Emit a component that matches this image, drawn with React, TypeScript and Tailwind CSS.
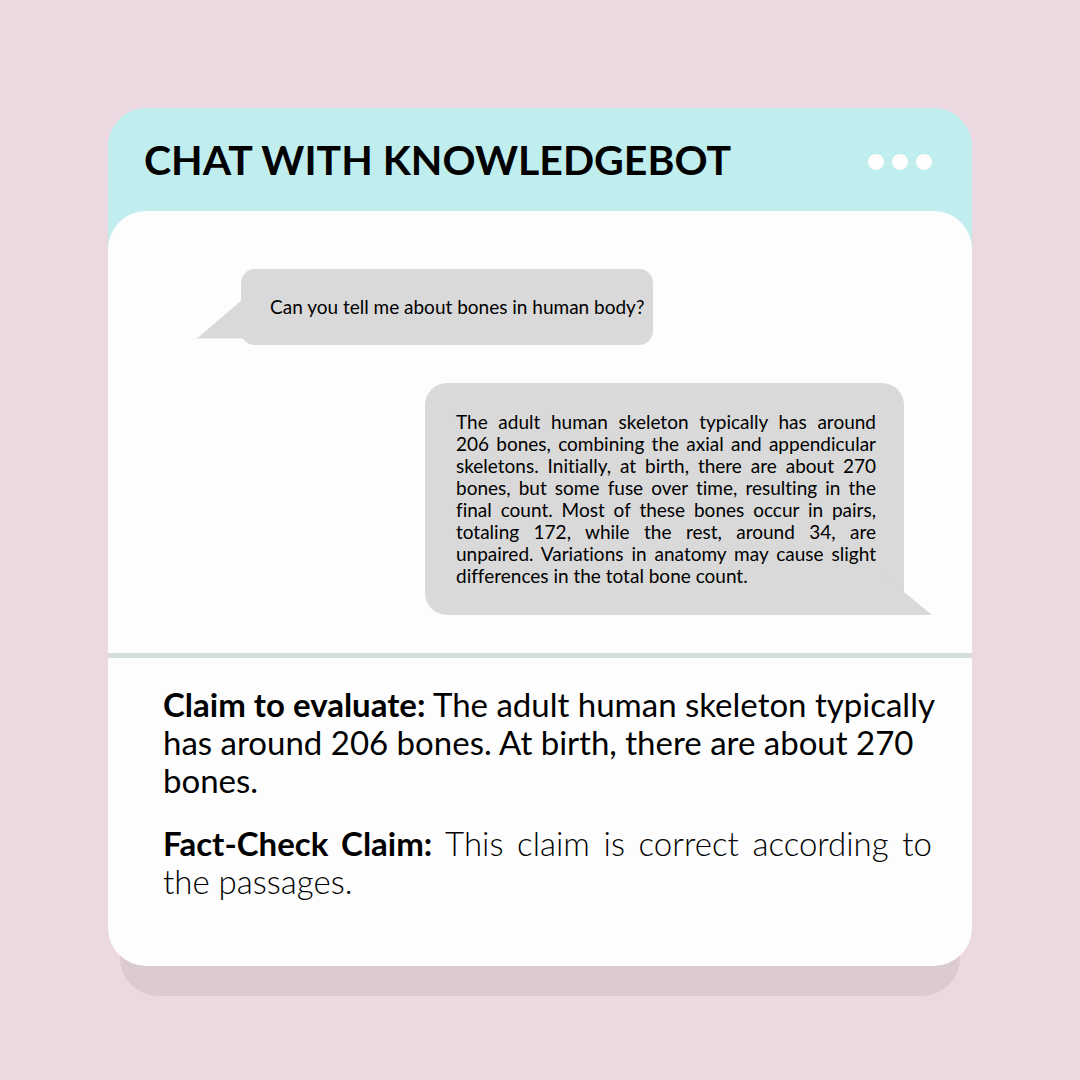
import type { ReactNode } from "react";

function Bubble({ className, children }: { className: string; children: ReactNode }) {
  return <div className={`relative bg-[#d9d9d9] text-[19px] leading-[22px] ${className}`}>{children}</div>;
}

export default function App() {
  return (
    <div className="min-h-screen bg-[#ebd8e1] p-27 font-['Lato',sans-serif] text-black [font-variant-ligatures:no-common-ligatures]">
      <main className="relative isolate">
        <div className="absolute inset-x-3 -bottom-[30px] -z-10 h-24 rounded-[38px] bg-[#dbcad2]" />
        <header className="flex items-center justify-between rounded-t-[38px] bg-[#c0eeee] px-9 pb-10">
          <h1 className="pt-[2px] pb-[2px] text-[41px] leading-[99px] font-bold">CHAT WITH KNOWLEDGEBOT</h1>
          <button type="button" aria-label="More options" className="mt-1 mr-1 flex gap-2">
            <span className="size-4 rounded-full bg-[#fdfdfd]" />
            <span className="size-4 rounded-full bg-[#fdfdfd]" />
            <span className="size-4 rounded-full bg-[#fdfdfd]" />
          </button>
        </header>
        <div className="relative -mt-10 rounded-[38px] bg-[#fdfdfd]">
          <section aria-label="Conversation" className="flex flex-col gap-[38px] pt-[58px] pr-[68px] pb-[38px] pl-[133px]">
            <Bubble className="w-[412px] self-start rounded-[14px] py-[27px] pl-[29px]">
              <svg aria-hidden="true" viewBox="0 0 60 40" className="absolute top-[30px] -left-11 h-10 w-15" fill="#d9d9d9">
                <path d="M0 39.5 L46 0 V39.5 Z" />
              </svg>
              <p className="relative whitespace-nowrap">Can you tell me about bones in human body?</p>
            </Bubble>
            <Bubble className="w-[479px] self-end rounded-[22px] py-7 pr-7 pl-[31px]">
              <svg aria-hidden="true" viewBox="0 0 60 46" className="absolute -right-7 bottom-0 h-[46px] w-15" fill="#d9d9d9">
                <path d="M4 0 L60 46 H4 Z" />
              </svg>
              <p className="relative text-justify">
                The adult human skeleton typically has around 206 bones, combining the axial and appendicular skeletons.
                Initially, at birth, there are about 270 bones, but some fuse over time, resulting in the final count. Most
                of these bones occur in pairs, totaling 172, while the rest, around 34, are unpaired. Variations in anatomy
                may cause slight differences in the total bone count.
              </p>
            </Bubble>
          </section>
          <hr className="border-t-[5px] border-[#d3dddc]" />
          <section aria-label="Fact check" className="flex flex-col gap-[25px] pt-[27px] pr-8 pb-[66px] pl-[55px] text-[33px] leading-[38px]">
            <p>
              <strong>Claim to evaluate:</strong> The adult human skeleton typically has around 206 bones. At birth, there
              are about 270 bones.
            </p>
            <p className="mr-2 text-justify font-light">
              <strong className="font-bold">Fact-Check Claim:</strong> This claim is correct according to the passages.
            </p>
          </section>
        </div>
      </main>
    </div>
  );
}
